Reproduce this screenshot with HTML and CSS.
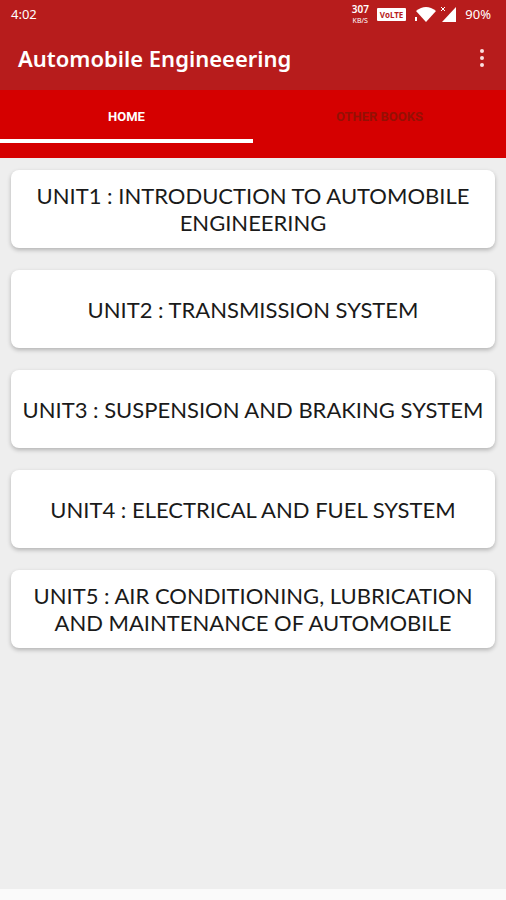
FILE: index.html
```html
<!DOCTYPE html>
<html lang="en">
  <head>
    <meta charset="utf-8">
    <meta name="viewport" content="width=device-width, initial-scale=1">
    <title>Automobile Engineeering</title>
    <link rel="stylesheet" href="styles.css">
  </head>
  <body>
    <header>
      <div class="status-bar">
        <span>4:02</span>
        <div class="status-icons">
          <span class="net-speed"><b>307</b><small>KB/S</small></span>
          <span class="volte">VoLTE</span>
          <svg class="wifi" width="22" height="18" viewBox="0 0 22 18" fill="#fff" aria-hidden="true">
            <path d="M2 6Q12 -2 22 6L12 17Z"/>
            <path d="M1 12h2v4H1z"/>
          </svg>
          <svg class="signal" width="17" height="18" viewBox="0 0 17 18" aria-hidden="true">
            <path d="M16 2V17H2Z" fill="#fff"/>
            <path d="M1 2L5 6M5 2L1 6" stroke="#fff" stroke-width="1"/>
          </svg>
          <span>90%</span>
        </div>
      </div>
      <div class="app-bar">
        <h1>Automobile Engineeering</h1>
        <button class="menu" aria-label="More options">
          <svg width="6" height="18" viewBox="0 0 6 18" fill="#fbe0e0" aria-hidden="true">
            <circle cx="3" cy="2" r="2"/>
            <circle cx="3" cy="9" r="2"/>
            <circle cx="3" cy="16" r="2"/>
          </svg>
        </button>
      </div>
    </header>
    <nav class="tabs">
      <a class="tab active" href="#home">HOME</a>
      <a class="tab" href="#books">OTHER BOOKS</a>
    </nav>
    <main class="units" id="home">
      <button class="card">UNIT1 : INTRODUCTION TO AUTOMOBILE ENGINEERING</button>
      <button class="card">UNIT2 : TRANSMISSION SYSTEM</button>
      <button class="card">UNIT3 : SUSPENSION AND BRAKING SYSTEM</button>
      <button class="card">UNIT4 : ELECTRICAL AND FUEL SYSTEM</button>
      <button class="card">UNIT5 : AIR CONDITIONING, LUBRICATION AND MAINTENANCE OF AUTOMOBILE</button>
    </main>
    <footer class="bottom-strip"></footer>
  </body>
</html>
```
FILE: styles.css
```css
* {
  box-sizing: border-box;
}
body {
  display: flex;
  flex-direction: column;
  min-height: 100vh;
  margin: 0;
  font-family: "Noto Sans", sans-serif;
  background-color: #eee;
}
header {
  color: #fff;
  background-color: #b71c1c;
}
.status-bar {
  display: flex;
  justify-content: space-between;
  align-items: center;
  height: 28px;
  padding: 0 15px 0 11px;
  font-size: 13px;
}
.status-icons {
  display: flex;
  align-items: center;
  gap: 8px;
}
.net-speed {
  display: flex;
  flex-direction: column;
  align-items: center;
}
.net-speed b {
  font-size: 10px;
  font-weight: 600;
  line-height: 13px;
}
.net-speed small {
  font-size: 7px;
  line-height: 10px;
}
.volte {
  padding: 0 3px;
  font-size: 8px;
  font-weight: 700;
  line-height: 13px;
  color: #b71c1c;
  background-color: #fff;
  border-radius: 1px;
}
.signal {
  margin-left: -4px;
}
.app-bar {
  display: flex;
  justify-content: space-between;
  align-items: center;
  height: 62px;
  padding: 0 13px 2px 18px;
}
h1 {
  margin: 0;
  font-size: 22px;
  font-weight: 600;
}
.menu {
  display: flex;
  padding: 8px;
  background: none;
  border: 0;
}
.tabs {
  display: flex;
  height: 68px;
  padding-bottom: 15px;
  background-color: #d50000;
}
.tab {
  flex: 1;
  display: flex;
  justify-content: center;
  align-items: center;
  padding-top: 4px;
  border-bottom: 4px solid transparent;
  font-family: Roboto, sans-serif;
  font-size: 13px;
  font-weight: 700;
  color: #941004;
  text-decoration: none;
}
.tab.active {
  color: #fff;
  border-bottom-color: #fff;
}
.units {
  flex: 1;
  display: flex;
  flex-direction: column;
  gap: 22px;
  padding: 12px 11px;
}
.card {
  min-height: 78px;
  padding: 0 8px;
  font-family: Lato, sans-serif;
  font-size: 22px;
  font-weight: 400;
  line-height: 27px;
  color: #1a1a1a;
  background-color: #fff;
  border: 0;
  border-radius: 8px;
  box-shadow: 0 2px 4px rgba(0, 0, 0, 0.25);
}
.bottom-strip {
  height: 11px;
  background-color: #fafafa;
}
```
